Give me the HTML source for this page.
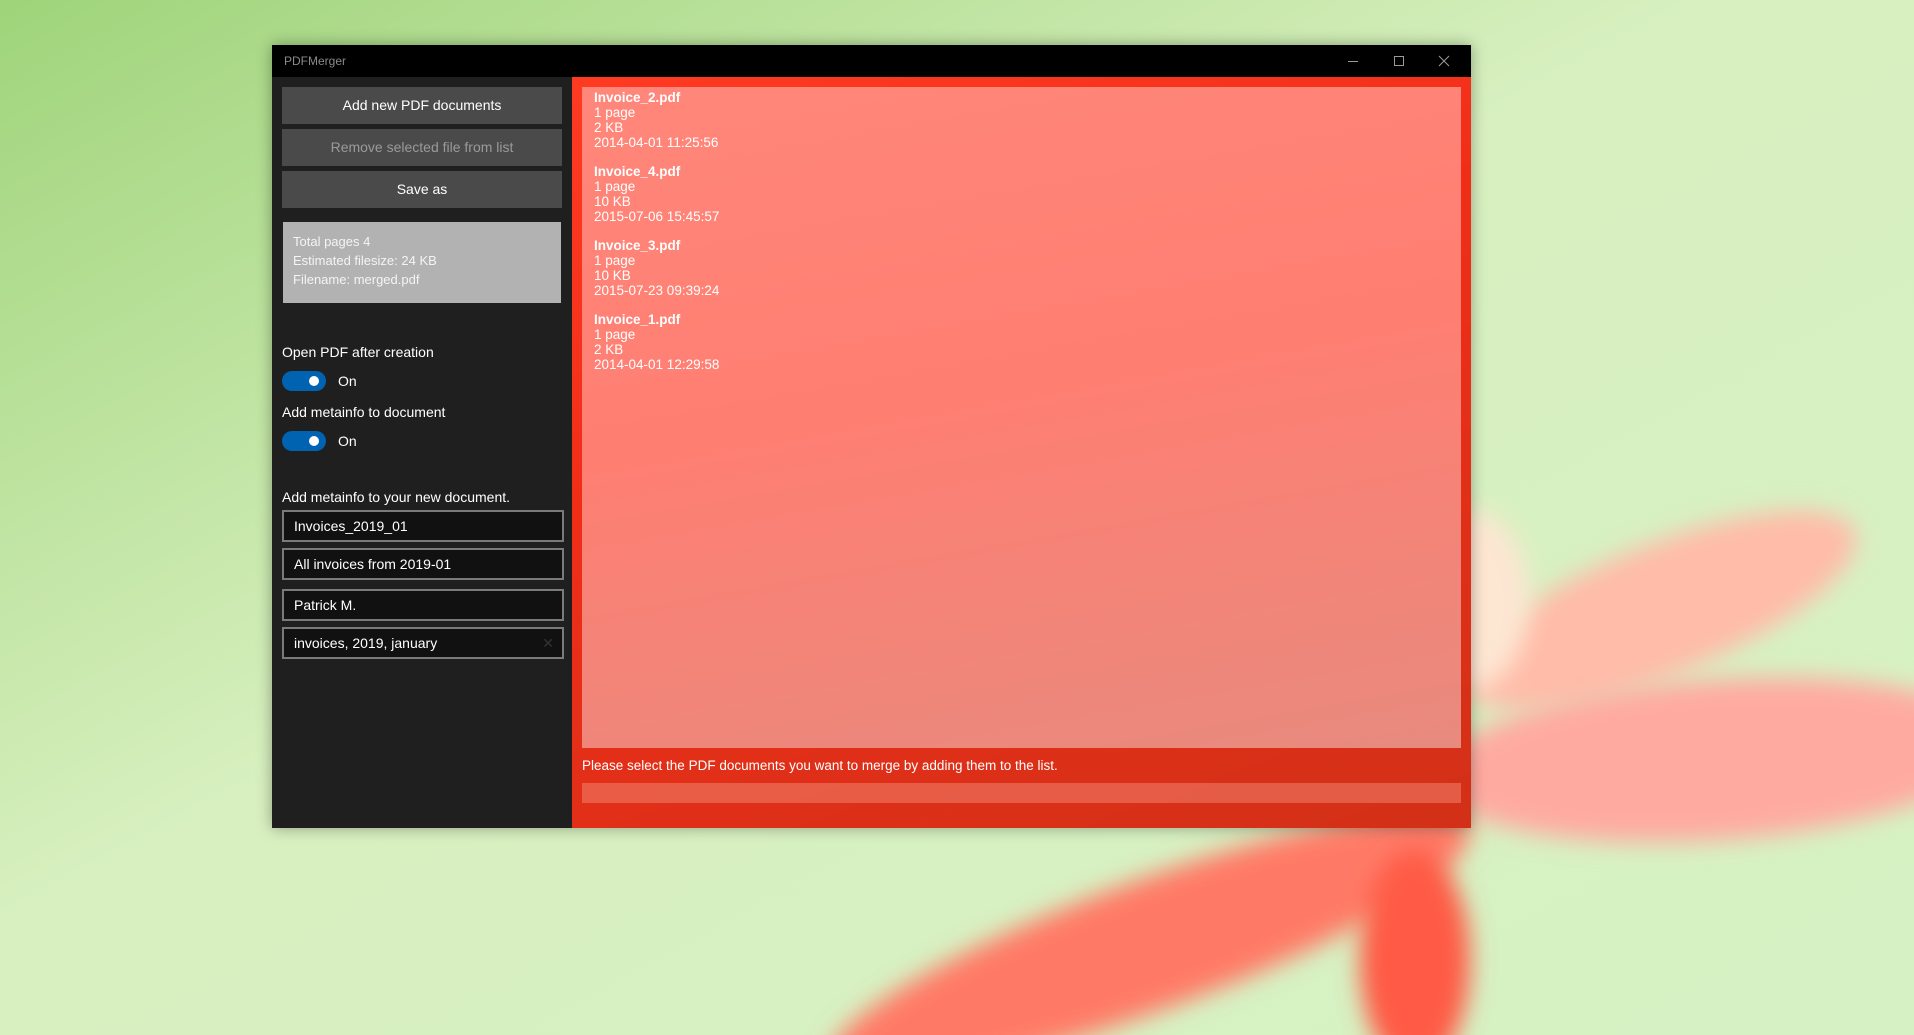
<!DOCTYPE html>
<html><head><meta charset="utf-8"><style>
*{margin:0;padding:0;box-sizing:border-box}
html,body{width:1914px;height:1035px;overflow:hidden}
body{position:relative;font-family:"Liberation Sans","DejaVu Sans",sans-serif;background:#cfeab0}
#bg{position:absolute;left:0;top:0;overflow:hidden}
.win{position:absolute;left:272px;top:45px;width:1199px;height:783px;box-shadow:0 0 14px rgba(0,0,0,.35)}
.title{position:absolute;left:0;top:0;width:100%;height:32px;background:#000;color:#8a8a8a;font-size:12px;line-height:32px;padding-left:12px}
.left{position:absolute;left:0;top:32px;width:300px;height:751px;background:#1f1f1f}
.btn{position:absolute;left:10px;width:280px;height:37px;background:#4a4a4a;color:#fff;font-size:14px;text-align:center;line-height:37px}
.info{position:absolute;left:11px;top:145px;width:278px;height:81px;background:#b2b2b2;color:#f4f4f4;font-size:13px;line-height:19px;padding:10px 10px}
.lbl{position:absolute;left:10px;color:#fff;font-size:14px}
.tog{position:absolute;left:10px;width:44px;height:20px;border-radius:10px;background:#0063b1}
.tog:after{content:"";position:absolute;right:7px;top:5px;width:10px;height:10px;border-radius:5px;background:#fff}
.inp{position:absolute;left:10px;width:282px;height:32px;border:2px solid #7a7a7a;background:#111;color:#fff;font-size:14px;line-height:28px;padding-left:10px}
.right{position:absolute;left:300px;top:32px;width:899px;height:751px;background:linear-gradient(160deg,#ff3a22 0%,#f02e18 40%,#d23018 100%)}
.list{position:absolute;left:10px;top:10px;width:879px;height:661px;background:linear-gradient(170deg,#ff877a 0%,#ff7e72 45%,#e88a7e 100%);color:#fff;font-size:13.5px;line-height:15px;padding:3px 12px}
.item{margin-bottom:14px}
.msg{position:absolute;left:10px;top:681px;color:#fff;font-size:13.5px}
.prog{position:absolute;left:10px;top:706px;width:879px;height:20px;background:rgba(240,130,110,.55)}
</style></head><body>
<svg id="bg" width="1914" height="1035">
<defs>
<linearGradient id="g" x1="0" y1="0" x2="1" y2="1"><stop offset="0" stop-color="#9fd47a"/><stop offset=".45" stop-color="#d8f0c0"/><stop offset="1" stop-color="#d6f2c4"/></linearGradient>
<filter id="b" x="-50%" y="-50%" width="200%" height="200%"><feGaussianBlur stdDeviation="12"/></filter>
</defs>
<rect width="1914" height="1035" fill="url(#g)"/>
<ellipse cx="1660" cy="610" rx="210" ry="65" transform="rotate(-22 1660 610)" fill="#ffbca8" filter="url(#b)"/>
<ellipse cx="1470" cy="600" rx="60" ry="90" fill="#fde6d2" filter="url(#b)"/>
<ellipse cx="1715" cy="760" rx="280" ry="80" transform="rotate(-4 1715 760)" fill="#ffaaa0" filter="url(#b)"/>
<ellipse cx="1150" cy="945" rx="340" ry="65" transform="rotate(-20 1150 945)" fill="#ff7a66" filter="url(#b)"/>
<ellipse cx="1415" cy="960" rx="55" ry="110" fill="#ff5a44" filter="url(#b)"/>
</svg>
<div class="win">
<div class="title">PDFMerger
<svg style="position:absolute;right:0;top:0" width="140" height="32"><g stroke="#9a9a9a" stroke-width="1" fill="none"><line x1="17" y1="16.5" x2="27" y2="16.5"/><rect x="63.5" y="11.5" width="9" height="9"/><path d="M108 11 L118 21 M118 11 L108 21"/></g></svg>
</div>
<div class="left">
<div class="btn" style="top:10px">Add new PDF documents</div>
<div class="btn" style="top:52px;color:#9a9a9a">Remove selected file from list</div>
<div class="btn" style="top:94px">Save as</div>
<div class="info">Total pages 4<br>Estimated filesize: 24 KB<br>Filename: merged.pdf</div>
<div class="lbl" style="top:267px">Open PDF after creation</div>
<div class="tog" style="top:294px"></div><div class="lbl" style="left:66px;top:296px">On</div>
<div class="lbl" style="top:327px">Add metainfo to document</div>
<div class="tog" style="top:354px"></div><div class="lbl" style="left:66px;top:356px">On</div>
<div class="lbl" style="top:412px">Add metainfo to your new document.</div>
<div class="inp" style="top:433px">Invoices_2019_01</div>
<div class="inp" style="top:471px">All invoices from 2019-01</div>
<div class="inp" style="top:512px">Patrick M.</div>
<div class="inp" style="top:550px">invoices, 2019, january<span style="position:absolute;right:8px;color:#333">✕</span></div>
</div>
<div class="right">
<div class="list">
<div class="item"><b>Invoice_2.pdf</b><br>1 page<br>2 KB<br>2014-04-01 11:25:56</div>
<div class="item"><b>Invoice_4.pdf</b><br>1 page<br>10 KB<br>2015-07-06 15:45:57</div>
<div class="item"><b>Invoice_3.pdf</b><br>1 page<br>10 KB<br>2015-07-23 09:39:24</div>
<div class="item"><b>Invoice_1.pdf</b><br>1 page<br>2 KB<br>2014-04-01 12:29:58</div>
</div>
<div class="msg">Please select the PDF documents you want to merge by adding them to the list.</div>
<div class="prog"></div>
</div>
</div>
</body></html>
